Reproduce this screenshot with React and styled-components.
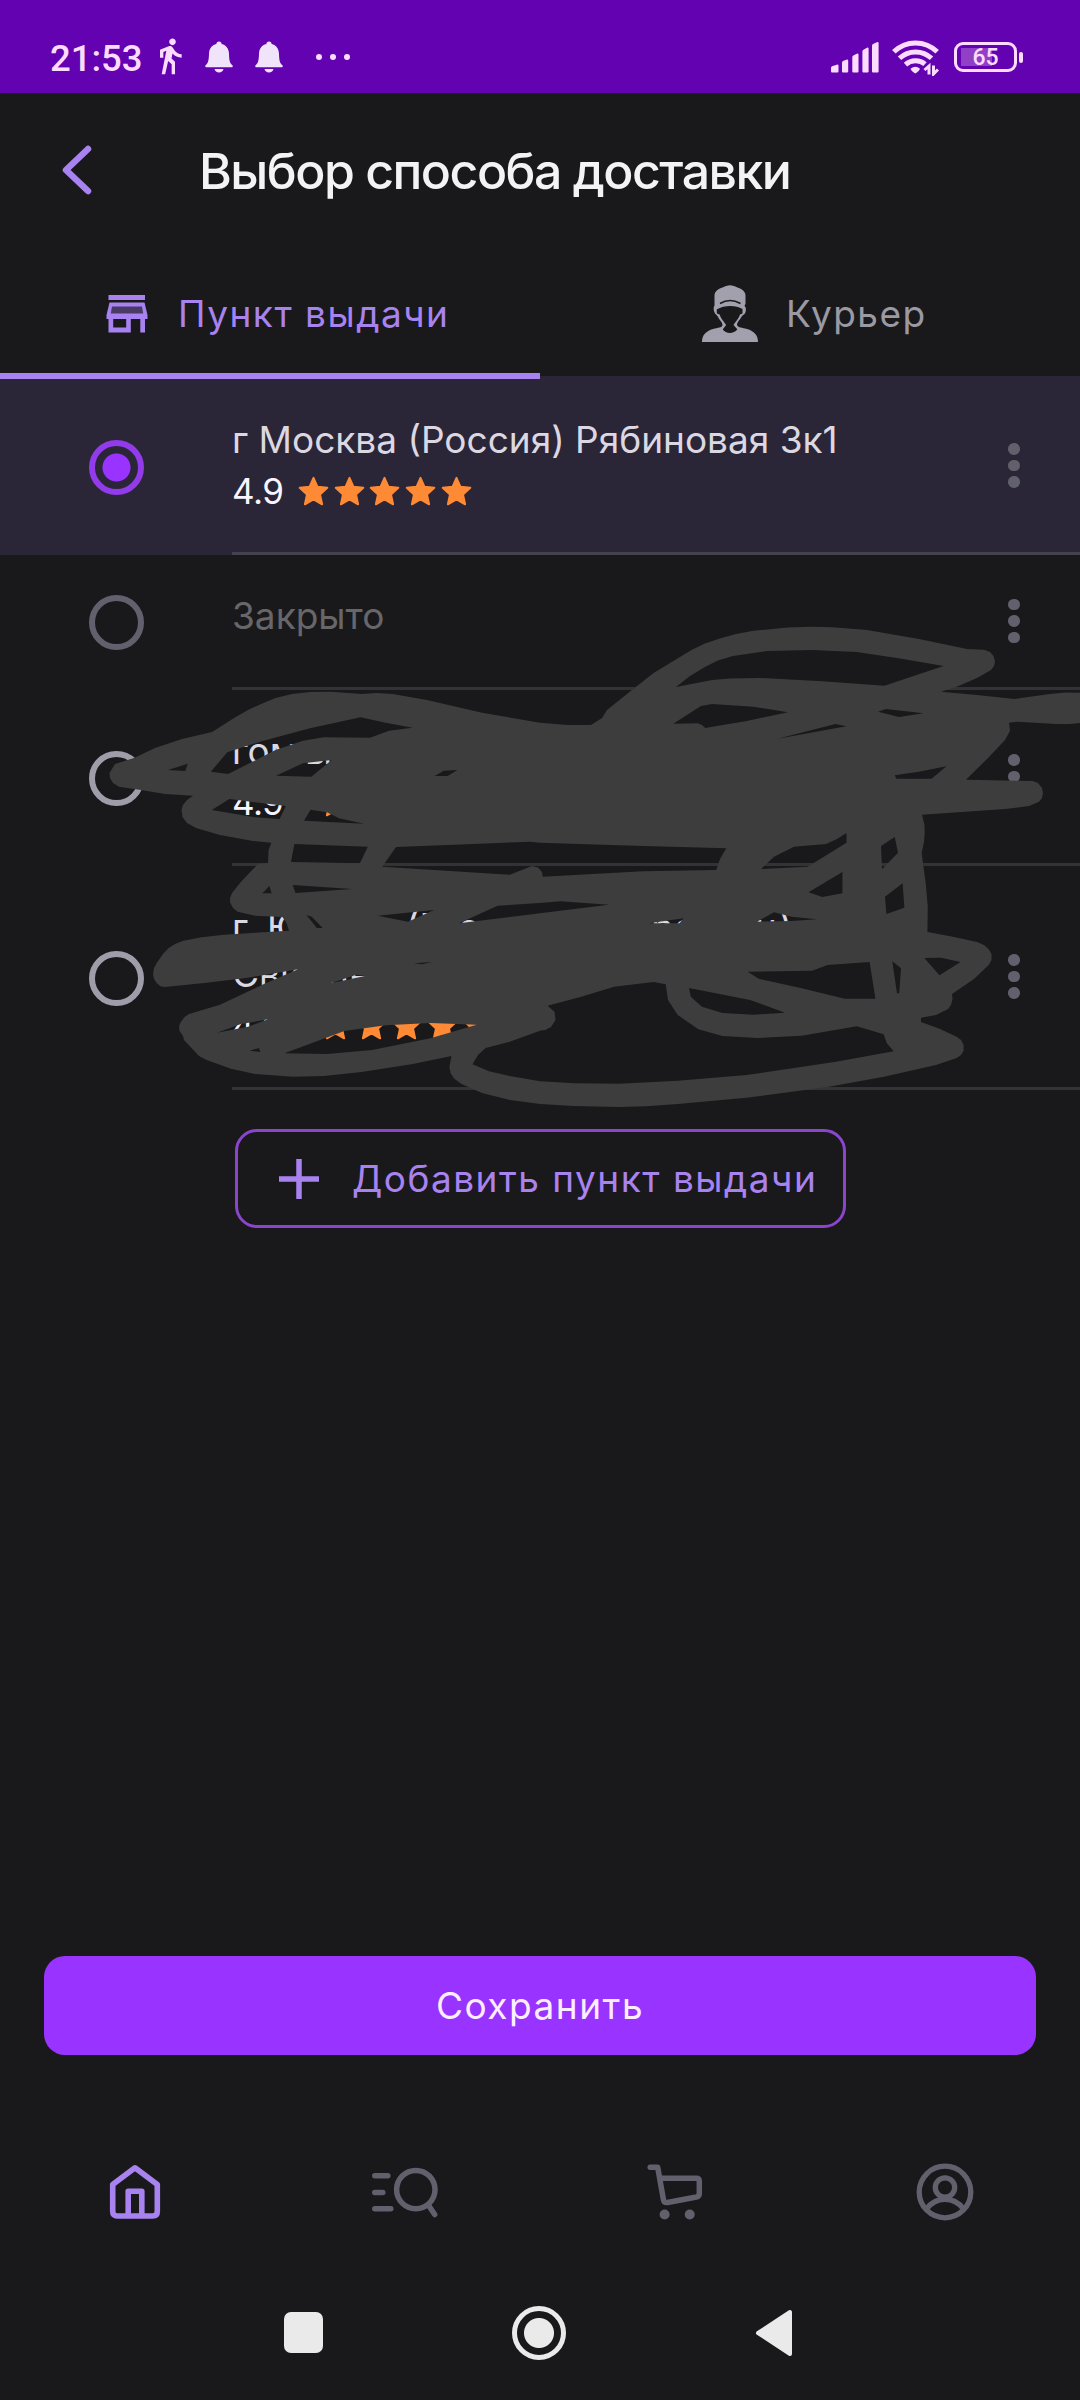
import styled, { createGlobalStyle } from "styled-components";
import { MdDirectionsWalk } from "react-icons/md";

const points = [
  {
    id: 1,
    height: 179,
    selected: true,
    lines: [[{ text: "г Москва (Россия) Рябиновая 3к1" }]],
    rating: "4.9",
    starGap: 14,
  },
  { id: 2, height: 135, closed: true, lines: [[{ text: "Закрыто" }]] },
  {
    id: 3,
    height: 176,
    lines: [[{ text: "гом" }, { text: "ы", x: 73 }]],
    rating: "4.9",
    starGap: 36,
  },
  {
    id: 4,
    height: 224,
    lines: [
      [
        { text: "г. Ю" },
        { text: "(Р", x: 174 },
        { text: "сс", x: 226 },
        { text: "рс", x: 419 },
        { text: "н", x: 523 },
        { text: ")", x: 547 },
      ],
      [{ text: "Сви" }, { text: "нн", x: 95 }],
    ],
    rating: "4.9",
    starGap: 36,
  },
];

const scribbleOutline =
  "M109.5 773L115 764L134 758L155 748L182 739L212 732L220 727L234 718L248 710L261 704L275.5 698L292 694L310 692L331 691.7L361.6 694L377 693L392.6 694L427 700L482 712.7L540 722.7L567.5 725L591 725L602 718L607 710L631 690.7L653.6 673L691.5 650L705 643.5L719 638.7L736 634L753.5 630.7L788 627.5L810 626.8L832.7 627.3L867 630L919 639L967 649L984 649.7L990 652L993.5 656L995 661.7L994 666L991 670L977 678L956.7 686.7L941 691.7L977 695L1014.5 699L1049.7 694L1066 692.5L1080 692.7L1080 723L1070 724L1056.5 724L1017 721.7L1009 722.7L1010 730.7L1005 740L988 758L966 779.7L1032.5 781L1038 783L1042 788L1043 793L1042 798L1039 801.7L1029 806L1005 809L922 814.7L924.5 825L924.7 833L924 842L921.6 853L925.7 883L927.8 906.7L927.4 932L953 936.7L977 942L984 945L988.5 949L991.5 954L991.5 960L988.7 965L974 979L952 994L952.5 999L951 1005L948 1009L936 1015L921 1017.7L921 1022L939.5 1028.7L956.7 1036.7L961 1040L963.6 1045L963.6 1051L961 1055L956.7 1058L936 1065L884 1076.7L829 1086.7L746.6 1097.7L677.7 1104L646 1106.3L619 1107L574 1106L540 1104L510 1100L482 1093L461.5 1084L454 1078.5L450.5 1073L449.4 1066.7L451.5 1056L413 1064L361.6 1072L324 1076L293 1076.7L255 1074L231 1068.7L206.6 1060L199 1056L184 1040L183 1036L179.5 1031L179 1026L181 1021.7L184.5 1017L189 1014L220 1004.7L261.7 985L298 969.3L248 977.7L206.6 982.7L165 987L160.5 986.2L157 983.5L154 979L153 974L154 968L156.7 963L163 954L168.7 948L175 944L182.5 941L200 937.5L224 934.7L289 930.7L286.5 923L282.4 917L255 915.7L237.6 911.7L233 908L230.3 903L230 898L232 893L241 881.7L258 864L268 863L268.6 850L271.4 842.7L253 841L220 835L196 828L187 823L182.5 817L181.5 810L183 805L187 800L193 795.7L165 794L141 790L119 786.7L113 783L110 778Z";

// gaps between the strokes, the list shows through them
const scribbleGaps = [
  "210.8 771.7 227.3 752.3 261.7 741.3 310 728.3 360.6 717.3 385.7 722.7 412.6 727.7 389 730.7 370 737.7 323.7 737.3 303 740.7 275.5 750 248 764 228 774",
  "168 770 187.7 763.7 185.3 771",
  "276 775.7 303 763.3 331.6 760 311.3 776.7",
  "211.8 810 229.4 799 254.8 802.3 285.8 806 279.6 819 254.8 817.3",
  "304 820.7 310.6 809.7 327 812.3 339 818.3 364 823.7",
  "434.6 776 444 770.7 457.3 770 447.7 776",
  "676 687 690 676 705.3 666.7 718 660.5 732.9 656 767.3 651 812 650 856.8 652 901.6 658.7 943.6 666 884.4 685.7 822.4 681.3 760.4 678 730 678.5 712 680",
  "673.3 723.7 701 706 712 704 753.5 706.7 788 712.3 746.6 721 705.3 728 702 725 697.7 723.3",
  "777.6 738.7 835.5 724 846.5 726.3",
  "878 711.7 886 709 923.3 713.3 899 717",
  "894.7 775.3 918.8 771.7 946.4 766.3 931.6 778.7 896.4 778.7",
  "294.4 844 367.8 846.7 359.9 863.3 291 862",
  "396 847 454.6 844.7 530.3 841.7 540 842.7 643.3 846 726.3 848.3 720 859 716.3 870 643 871.3 542.8 876.7 542 872 538 867.5 532 866 509.7 874.7 382.3 866.7",
  "761 869 774 856.7 794 846.7 826 844 837 839 846.5 833 846.5 842.7 807.6 866.7",
  "881 846 894.7 837 898 852.7 882 869.3",
  "808.6 892.3 842.4 872 842.4 893.3 822.4 897",
  "885 896.7 902.6 883.3 904.4 907.7 886.4 914",
  "262.4 893.3 269.3 886 271.7 893.3",
  "292.7 885 352 889 295.5 893",
  "377.8 915.7 434 910 408 921.7",
  "306.5 915 311.7 916.7 322.7 928 316.8 928",
  "459 923.3 497.7 905.7 540 903 560.7 901.3 608.9 904.7 540 913.3",
  "648.8 923.3 683.6 918.3 679.5 923.3",
  "757 921.7 774 912.3 791.4 916.7 817 919.3 791.4 921",
  "330.6 983.3 356.4 974.7 365 976",
  "414 963.3 431.8 962 422 964.3",
  "217 1032.7 241 1024 268 1019.3 248 1026.7",
  "249.7 1050.7 259 1048 260.4 1052",
  "284.5 1053.3 344.4 1031 385.7 1025.3 430.5 1023 476.6 1024.7 430.5 1038.3 372 1050 327 1054",
  "472.5 1064.3 478 1055 485.6 1048 509.7 1041.7 540 1030.7 545 1030 551 1027 555.5 1020 554.5 1011.7 547.6 1005.7 581.3 996.7 614 986.7 653.6 982 665.7 984.3 668 1000 677.7 1015 698.4 1029.3 722.5 1036 757 1038 801.7 1035.7 856.8 1026.3 883.7 1034.3 886.8 1043.3 893.7 1051.3 836 1061.7 746.6 1075 677.7 1080.7 619 1083.7 574.4 1083.3 540 1081.3 509.7 1076 489 1071.3",
  "689 988 750 1000 785 1012.7 753.5 1014.7 722.5 1013 701.9 1006.7 690.8 996.7",
  "747.7 971.7 812 970.7 827.5 965 869.6 962 875.4 998.7 844.8 998.7 801.7 988.3 758.7 978.7",
  "892.3 961.3 901 968.3 899.2 993.3 897 993.3",
  "924.3 958 941 957.7 960.5 962 939.5 975.3",
];

const scribblePath =
  scribbleOutline + scribbleGaps.map((gap) => `M${gap}Z`).join("");

function Bell() {
  return (
    <svg width="28" height="32" viewBox="0 0 28 32" fill="#f1e4fa">
      <path d="M14 .5c1.7 0 2.6 1 2.6 2.6 4.8 1.2 7.2 4.8 7.4 9.6.2 6 .7 9.300 3.200 11.300.9.8.7 2.200-.7 2.200H1.500c-1.400 0-1.600-1.400-.7-2.200 2.500-2 3-5.300 3.200-11.300.2-4.800 2.600-8.400 7.400-9.600C11.400 1.500 12.300.5 14 .5z" />
      <path d="M9.500 28h9c-.4 2.200-2.200 3.600-4.500 3.600S9.900 30.200 9.500 28z" />
    </svg>
  );
}

function Signal() {
  return (
    <svg width="48" height="31" viewBox="0 0 48 31" fill="#fbdcff">
      <path d="M0 29.500V26q0-1 1-1.700L6.500 22.500q1 0 1 1V29.500q0 1-1 1H1q-1 0-1-1z" />
      <path d="M11 29.500V20.500q0-1 1-1.500l4-1.500q1.200 0 1.200 1v11q0 1-1 1H12q-1 0-1-1z" />
      <path d="M21.300 29.500V15q0-1 1-1.500l4-2q1.200 0 1.200 1v17q0 1-1 1h-4.200q-1 0-1-1z" />
      <path d="M31.400 29.500V9.200q0-1 1-1.500l4-2.200q1.200 0 1.200 1v23q0 1-1 1h-4.200q-1 0-1-1z" />
      <path d="M41 29.500V3.500q0-1 1-1.500L46.400 0q1.200 0 1.200 1v28.500q0 1-1 1H42q-1 0-1-1z" />
    </svg>
  );
}

function Wifi() {
  return (
    <svg width="47" height="37" viewBox="0 0 47 37" fill="none" stroke="#fbdcff">
      <path d="M1.800 12.800C14 .9 33 .9 45.200 12.800" strokeWidth="5" />
      <path d="M7.500 19.300C16.500 10.800 30.500 10.800 39.500 19.300" strokeWidth="5" />
      <path d="M13.500 25.600C19.200 20.500 27.800 20.500 33 25.200" strokeWidth="5" />
      <path
        d="M18.500 29.800q5-4 9.500 0-.5 2-4.700 4.700-4.300-2.700-4.800-4.700z"
        fill="#fbdcff"
        stroke="none"
      />
      <path d="M37 35.500V27l-4.500 4M41.500 26.500V35l4.500-4.500" strokeWidth="3" />
    </svg>
  );
}

function StoreIcon() {
  return (
    <svg width="42" height="38" viewBox="0 0 42 38">
      <path d="M3.500 7.500h35L41.500 20v4H.5v-4z" fill="#a883f0" />
      <path d="M6 11.500h30l1.200 7H4.800z" fill="#493a66" />
      <path
        d="M2.500 0h36.500v5H2.500zM2.500 23h4.700v9.500h13V23h4.600v14.500H2.500zM34.300 23H39v14.500h-4.700z"
        fill="#a883f0"
      />
    </svg>
  );
}

function CourierIcon() {
  return (
    <svg width="56" height="57" viewBox="0 0 56 57" fill="#a3a0ae">
      <path d="M12.500 20V10.500C12.500 5 19 3 25 .8q3-1.200 6 0C37 3 43.500 5 43.500 10.500V19l-1 1.500q2.500 3.500.5 8l-3 2.500c-2.500 4.500-5 6-5 9 1.500 3 5 2.500 10 4 7 2 11 6 11 13H0c0-7 4-11 11-13 5-1.500 9-1 9.500-4 0-3-3-4.500-5-9l-2.500-2.500q-2.500-4.500-.5-8z" />
      <path
        d="M14.700 24.500C22 20 34 20 40.500 24v4.500l-2.500 1c-2 5.500-4.500 7-6.500 10.500 1.500 2 3.300 3 3.800 4.500-3.500 4.500-11.500 4.500-14.500 0 .5-1.500 2.200-2.500 3.300-4.500-2-3.500-4.500-5-6.500-10.500l-2.700-1z"
        fill="#19191b"
      />
      <path d="M18 18.500q10-6 20.500 0" fill="none" stroke="#19191b" strokeWidth="1.600" />
    </svg>
  );
}

function Star() {
  return (
    <svg width="31" height="31" viewBox="0 0 31 31">
      <path
        d="M15.500 1.800l4 9 9.800 1-7.300 6.600 2.100 9.900-8.600-5-8.600 5 2.100-9.900L1.700 11.800l9.800-1z"
        fill="#ff8a35"
        stroke="#ff8a35"
        strokeWidth="2"
        strokeLinejoin="round"
      />
    </svg>
  );
}

function HomeIcon() {
  return (
    <svg width="52" height="56" viewBox="0 0 52 56" fill="none" stroke="#a883f0" strokeWidth="5.600" strokeLinejoin="round">
      <path d="M3.700 20.500L26 3.800l22.300 16.700V47.500q0 4.500-4.500 4.500H8.200q-4.500 0-4.500-4.500z" />
      <path d="M19.200 52V27.200h13.600V52" />
    </svg>
  );
}

function SearchIcon() {
  return (
    <svg width="66" height="52" viewBox="0 0 66 52" fill="none" stroke="#63606d" strokeWidth="5.500" strokeLinecap="round">
      <circle cx="43.800" cy="23.600" r="19.200" />
      <path d="M57 40l5.700 8.500M2.800 9.800h13M2.800 26.500h8M2.800 42.700h16" />
    </svg>
  );
}

function CartIcon() {
  return (
    <svg width="56" height="56" viewBox="0 0 56 56" fill="none" stroke="#63606d" strokeWidth="5.500" strokeLinecap="round" strokeLinejoin="round">
      <path d="M3.200 3.200h7.500L16.500 36q.8 3 4 2.500L49.500 33q2.800-.6 2.800-3.500V17.200q0-3-3-3H14" />
      <circle cx="17.600" cy="50.500" r="5" fill="#63606d" stroke="none" />
      <circle cx="42.700" cy="50.500" r="5" fill="#63606d" stroke="none" />
    </svg>
  );
}

function ProfileIcon() {
  return (
    <svg width="58" height="58" viewBox="0 0 58 58" fill="none" stroke="#63606d" strokeWidth="5.300">
      <circle cx="29" cy="29" r="25.800" />
      <circle cx="29" cy="24.500" r="9.700" />
      <path d="M10.500 46C20 33 38 33 47.500 46" />
    </svg>
  );
}

function PickupPoint({ point }) {
  return (
    <Row $height={point.height} $selected={point.selected}>
      <RadioCell>
        <Radio $selected={point.selected} $closed={point.closed} />
      </RadioCell>
      <Info $closed={point.closed}>
        {point.lines.map((line, i) => (
          <Line key={i}>
            {line.map((part) => (
              <Part key={part.text} $x={part.x}>
                {part.text}
              </Part>
            ))}
          </Line>
        ))}
        {point.rating ? (
          <Rating>
            <span>{point.rating}</span>
            <Stars $gap={point.starGap}>
              {[1, 2, 3, 4, 5].map((n) => (
                <Star key={n} />
              ))}
            </Stars>
          </Rating>
        ) : null}
      </Info>
      <Menu>
        <i />
        <i />
        <i />
      </Menu>
    </Row>
  );
}

function App() {
  return (
    <Screen>
      <GlobalStyle />
      <StatusBar>
        <Time>21:53</Time>
        <MdDirectionsWalk className="walk" />
        <Bells>
          <Bell />
          <Bell />
        </Bells>
        <More>
          <i />
          <i />
          <i />
        </More>
        <StatusRight>
          <Signal />
          <Wifi />
          <Battery>
            <BatteryBody>65</BatteryBody>
            <BatteryCap />
          </Battery>
        </StatusRight>
      </StatusBar>
      <Header>
        <svg width="34" height="52" viewBox="0 0 34 52">
          <path
            d="M28 5L6 26l22 21"
            fill="none"
            stroke="#a883f0"
            strokeWidth="6.500"
            strokeLinecap="round"
            strokeLinejoin="round"
          />
        </svg>
        <h1>Выбор способа доставки</h1>
      </Header>
      <Tabs>
        <Tab $active $left={106} $gap={30}>
          <StoreIcon />
          <span>Пункт выдачи</span>
        </Tab>
        <Tab $left={162} $gap={28}>
          <CourierIcon />
          <span>Курьер</span>
        </Tab>
      </Tabs>
      <List>
        {points.map((point) => (
          <PickupPoint point={point} key={point.id} />
        ))}
      </List>
      <AddButton>
        <svg width="40" height="40" viewBox="0 0 40 40">
          <path d="M20 0v40M0 20h40" stroke="#a883f0" strokeWidth="5.500" />
        </svg>
        <span>Добавить пункт выдачи</span>
      </AddButton>
      <Footer>
        <SaveButton>Сохранить</SaveButton>
        <BottomNav>
          <HomeIcon />
          <SearchIcon />
          <CartIcon />
          <ProfileIcon />
        </BottomNav>
        <SystemNav>
          <Recent />
          <HomeCircle />
          <svg width="38" height="48" viewBox="0 0 38 48">
            <path
              d="M3 24L35 3v42z"
              fill="#eaeaea"
              stroke="#eaeaea"
              strokeWidth="4"
              strokeLinejoin="round"
            />
          </svg>
        </SystemNav>
      </Footer>
      <Scribble viewBox="0 0 1080 2400">
        <path d={scribblePath} fill="#3d3d3d" fillRule="evenodd" />
      </Scribble>
    </Screen>
  );
}

const GlobalStyle = createGlobalStyle`
  body {
    margin: 0;
    background: #19191b;
  }
  * {
    box-sizing: border-box;
  }
  svg {
    display: block;
    flex: none;
  }
`;

const Screen = styled.div`
  position: relative;
  display: flex;
  flex-direction: column;
  width: 1080px;
  height: 2400px;
  overflow: hidden;
  background: #19191b;
  font-family: Inter, "Liberation Sans", sans-serif;
  font-size: 37px;
`;

const StatusBar = styled.div`
  display: flex;
  align-items: center;
  height: 93px;
  padding: 21px 57px 0 50px;
  background: #6202b0;
  color: #fbdcff;
  .walk {
    width: 40px;
    height: 40px;
    margin: -2px 0 0 7px;
  }
`;

const Time = styled.div`
  width: 93px;
  font-family: Roboto, sans-serif;
  font-size: 36.5px;
  font-weight: 500;
  white-space: nowrap;
  padding-top: 3px;
`;

const Bells = styled.div`
  display: flex;
  gap: 22px;
  margin-left: 15px;
`;

const More = styled.div`
  display: flex;
  gap: 8px;
  margin-left: 33px;
  i {
    width: 6px;
    height: 6px;
    border-radius: 50%;
    background: #fbdcff;
  }
`;

const StatusRight = styled.div`
  display: flex;
  align-items: center;
  margin-left: auto;
  gap: 13px;
`;

const Battery = styled.div`
  display: flex;
  align-items: center;
  gap: 2px;
  margin-left: 2px;
`;

const BatteryBody = styled.div`
  display: flex;
  align-items: center;
  justify-content: center;
  width: 63px;
  height: 30px;
  border: 3px solid #fbdcff;
  border-radius: 9px;
  background: linear-gradient(#9140c6, #9140c6) 4px 3px / 31px 18px no-repeat;
  font-family: Roboto, sans-serif;
  font-size: 23px;
  font-weight: 500;
  line-height: 24px;
  padding-top: 2px;
`;

const BatteryCap = styled.div`
  width: 4px;
  height: 11px;
  border-radius: 2px;
  background: #fbdcff;
`;

const Header = styled.div`
  display: flex;
  align-items: center;
  height: 158px;
  padding-left: 60px;
  svg {
    margin-top: -4px;
  }
  h1 {
    margin: -3px 0 0 105px;
    font-size: 50px;
    font-weight: 500;
    letter-spacing: -1.5px;
    line-height: 60px;
    color: #f3f3f5;
    white-space: nowrap;
  }
`;

const Tabs = styled.div`
  display: grid;
  grid-template-columns: 540px 540px;
  height: 125px;
`;

const Tab = styled.div`
  position: relative;
  display: flex;
  align-items: center;
  gap: ${(p) => p.$gap}px;
  padding-left: ${(p) => p.$left}px;
  letter-spacing: 1.5px;
  white-space: nowrap;
  color: ${(p) => (p.$active ? "#a883f0" : "#9b99a3")};
  &::after {
    content: "";
    display: ${(p) => (p.$active ? "block" : "none")};
    position: absolute;
    left: 0;
    right: 0;
    bottom: -3px;
    height: 6px;
    background: #a883f0;
  }
`;

const List = styled.div`
  display: flex;
  flex-direction: column;
`;

const Row = styled.div`
  display: grid;
  grid-template-columns: 232px 1fr;
  height: ${(p) => p.$height}px;
  padding-top: ${(p) => (p.$selected ? 3 : 0)}px;
  background: ${(p) => (p.$selected ? "#2b2637" : "transparent")};
  grid-template-columns: 232px 716px 132px;
  --line: ${(p) => (p.$selected ? "#45414f" : "#333335")};
`;

const RadioCell = styled.div`
  display: flex;
  align-items: center;
  padding-left: 89px;
`;

const Radio = styled.div`
  width: 55px;
  height: 55px;
  border: 6px solid
    ${(p) => (p.$selected ? "#923bea" : p.$closed ? "#63606d" : "#a09daa")};
  border-radius: 50%;
  background: ${(p) =>
    p.$selected
      ? "radial-gradient(circle, #9933ff 13.5px, transparent 14.500px)"
      : "none"};
`;

const Info = styled.div`
  padding-top: 37px;
  border-bottom: 3px solid var(--line);
  color: ${(p) => (p.$closed ? "#67676a" : "#dcd8e2")};
`;

const Line = styled.div`
  position: relative;
  height: 47px;
  line-height: 47px;
  white-space: pre;
`;

/* parts with an x are pinned inside the line */
const Part = styled.span`
  position: ${(p) => (p.$x ? "absolute" : "static")};
  left: ${(p) => p.$x || 0}px;
`;

const Rating = styled.div`
  display: flex;
  align-items: center;
  height: 56px;
  font-size: 35px;
  color: #f8f5ff;
  span {
    width: 52px;
    letter-spacing: -0.5px;
  }
`;

const Stars = styled.div`
  display: flex;
  gap: 4.7px;
  margin-left: ${(p) => p.$gap}px;
`;

const Menu = styled.div`
  display: flex;
  flex-direction: column;
  align-items: center;
  justify-content: center;
  gap: 5px;
  border-bottom: 3px solid var(--line);
  i {
    width: 11.5px;
    height: 11.5px;
    border-radius: 50%;
    background: #63606d;
  }
`;

const AddButton = styled.div`
  display: flex;
  align-items: center;
  width: 611px;
  height: 99px;
  margin: 39px 0 0 235px;
  padding-left: 41px;
  border: 3px solid #8b45cc;
  border-radius: 22px;
  color: #a883f0;
  letter-spacing: 1.5px;
  white-space: nowrap;
  span {
    margin-left: 33px;
  }
`;

const Footer = styled.div`
  margin-top: auto;
`;

const SaveButton = styled.div`
  display: flex;
  align-items: center;
  justify-content: center;
  height: 99px;
  margin: 0 44px;
  border-radius: 21px;
  background: #9933ff;
  color: #fdeeff;
  letter-spacing: 1.5px;
`;

const BottomNav = styled.div`
  display: grid;
  grid-template-columns: repeat(4, 270px);
  place-items: center;
  height: 130px;
  margin-top: 72px;
`;

const SystemNav = styled.div`
  display: flex;
  align-items: center;
  height: 142px;
  margin-top: 1px;
  padding: 7px 0 0 284px;
  svg {
    margin-left: 189px;
  }
`;

const Recent = styled.div`
  width: 39px;
  height: 41px;
  border-radius: 7px;
  background: #eaeaea;
`;

const HomeCircle = styled.div`
  width: 54px;
  height: 54px;
  margin-left: 189px;
  border: 5px solid #eaeaea;
  border-radius: 50%;
  background: radial-gradient(circle, #eaeaea 14.5px, transparent 15.5px);
`;

/* marker strokes drawn over the private addresses */
const Scribble = styled.svg`
  position: absolute;
  top: 0;
  left: 0;
  width: 1080px;
  height: 2400px;
  pointer-events: none;
`;

export default App;
